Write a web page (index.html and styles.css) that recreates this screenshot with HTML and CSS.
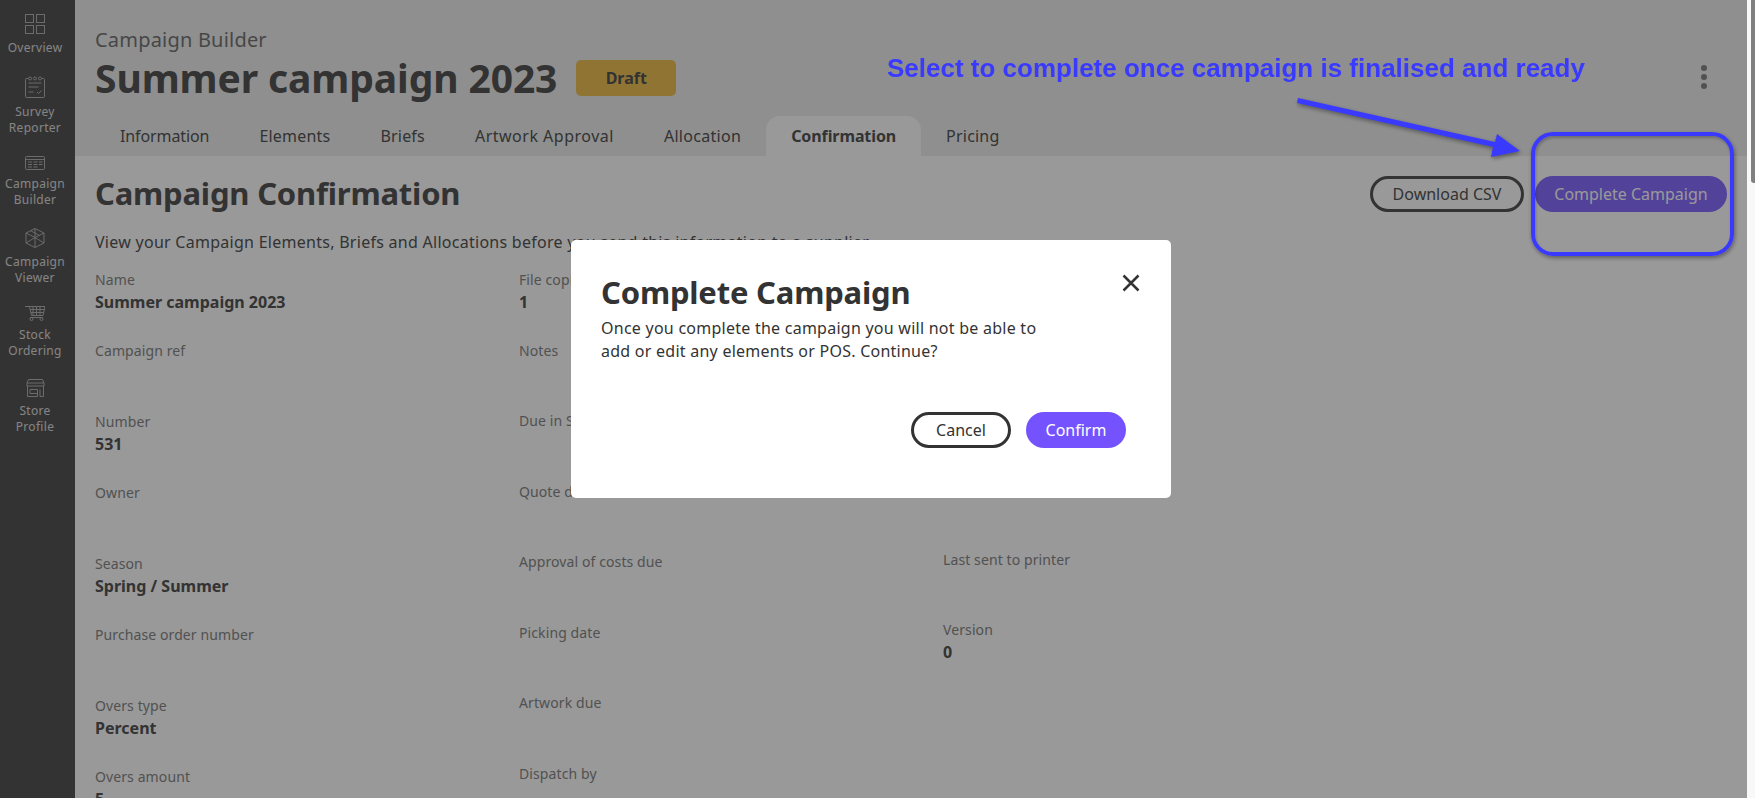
FILE: index.html
```html
<!DOCTYPE html>
<html lang="en">
<head>
  <meta charset="UTF-8" />
  <title>Campaign Builder</title>
  <link rel="stylesheet" href="styles.css">
</head>
<body>
  <nav class="sidebar">
    <a class="nav-item">
      <svg class="nav-icon" width="20" height="20" viewBox="0 0 20 20"><rect x=".5" y=".5" width="8" height="8"/><rect x="11.500" y=".5" width="8" height="8"/><rect x=".5" y="11.500" width="8" height="8"/><rect x="11.500" y="11.500" width="8" height="8"/></svg>
      <span>Overview</span>
    </a>
    <a class="nav-item">
      <svg class="nav-icon" width="20" height="22" viewBox="0 0 20 22"><path d="M3 2.500H1.500a1 1 0 0 0-1 1v17a1 1 0 0 0 1 1h17a1 1 0 0 0 1-1v-17a1 1 0 0 0-1-1H17"/><circle cx="5" cy="2.500" r="1.500"/><circle cx="10" cy="2.500" r="1.500"/><circle cx="15" cy="2.500" r="1.500"/><path d="M3.500 7h13M3.500 11h10M3.500 16h5M12 16l1.500 1.500 3-3"/></svg>
      <span>Survey<br>Reporter</span>
    </a>
    <a class="nav-item">
      <svg class="nav-icon" width="20" height="14" viewBox="0 0 20 14"><rect x=".5" y=".5" width="19" height="13" rx="1"/><path d="M1 3.500h18M3 6h4M3 8.500h4M3 11h4M8.500 6h4M8.500 8.500h4M8.500 11h4M14 6h3.500M14 8.500h3.500"/></svg>
      <span>Campaign<br>Builder</span>
    </a>
    <a class="nav-item">
      <svg class="nav-icon" width="20" height="20" viewBox="0 0 20 20"><path d="M10 .5l9 4.500v10l-9 4.500-9-4.500V5zM1 5l9 4.500L19 5M10 9.500v10M10 .5v9M1 15l9-5.500 9 5.500M5.500 2.700L14.500 7.500"/></svg>
      <span>Campaign<br>Viewer</span>
    </a>
    <a class="nav-item">
      <svg class="nav-icon" width="20" height="15" viewBox="0 0 20 15"><path d="M0 .5h20l-2 9H6.500L4.500.5M5 11.500h13M8 1v8.500M11.500 1v8.500M15 1v8.500M5 3.500h14M6 6.500h12.500"/><circle cx="6.500" cy="13" r="1.500"/><circle cx="16.500" cy="13" r="1.500"/></svg>
      <span>Stock<br>Ordering</span>
    </a>
    <a class="nav-item">
      <svg class="nav-icon" width="19" height="18" viewBox="0 0 19 18"><path d="M2.500.5h14l1.500 3.500H1zM1 4v3h17V4M1.500 7v10.500h10V10.500H4v4h7.500M17.500 7v10.500h-3.500v-7"/></svg>
      <span>Store<br>Profile</span>
    </a>
  </nav>

  <main class="page">
    <header class="page-head">
      <div class="head-top">
        <div class="crumb">Campaign Builder</div>
        <div class="title-row">
          <h1>Summer campaign 2023</h1>
          <span class="badge">Draft</span>
        </div>
      </div>
      <div class="more"><i></i><i></i><i></i></div>
      <div class="tabs">
        <a class="tab">Information</a>
        <a class="tab">Elements</a>
        <a class="tab">Briefs</a>
        <a class="tab">Artwork Approval</a>
        <a class="tab">Allocation</a>
        <a class="tab active">Confirmation</a>
        <a class="tab">Pricing</a>
      </div>
    </header>

    <section class="content">
      <div class="content-head">
        <h2>Campaign Confirmation</h2>
        <div class="actions">
          <button class="btn btn-outline btn-csv">Download CSV</button>
          <button class="btn btn-primary">Complete Campaign</button>
        </div>
      </div>
      <p class="intro">View your Campaign Elements, Briefs and Allocations before you send this information to a supplier.</p>

      <div class="fields">
        <div class="col col-a">
          <div class="field"><label>Name</label><strong>Summer campaign 2023</strong></div>
          <div class="field"><label>Campaign ref</label></div>
          <div class="field"><label>Number</label><strong>531</strong></div>
          <div class="field"><label>Owner</label></div>
          <div class="field"><label>Season</label><strong>Spring / Summer</strong></div>
          <div class="field"><label>Purchase order number</label></div>
          <div class="field"><label>Overs type</label><strong>Percent</strong></div>
          <div class="field"><label>Overs amount</label><strong>5</strong></div>
        </div>
        <div class="col col-b">
          <div class="field"><label>File copies</label><strong>1</strong></div>
          <div class="field"><label>Notes</label></div>
          <div class="field"><label>Due in Store</label></div>
          <div class="field"><label>Quote due</label></div>
          <div class="field"><label>Approval of costs due</label></div>
          <div class="field"><label>Picking date</label></div>
          <div class="field"><label>Artwork due</label></div>
          <div class="field"><label>Dispatch by</label></div>
        </div>
        <div class="col col-c">
          <div class="field"><label>Last sent to printer</label></div>
          <div class="field"><label>Version</label><strong>0</strong></div>
        </div>
      </div>
    </section>
  </main>

  <div class="scrollbar"><div class="scroll-thumb"></div></div>

  <div class="overlay"></div>

  <div class="modal-wrap">
    <div class="modal">
      <svg class="modal-close" width="18" height="18" viewBox="0 0 18 18"><path d="M1.500 1.500l15 15M16.500 1.500l-15 15"/></svg>
      <h3>Complete Campaign</h3>
      <p>Once you complete the campaign you will not be able to add or edit any elements or POS. Continue?</p>
      <div class="modal-actions">
        <button class="btn btn-outline modal-btn">Cancel</button>
        <button class="btn btn-confirm modal-btn">Confirm</button>
      </div>
    </div>
  </div>

  <!-- annotation drawn on top of the screenshot -->
  <div class="note-text">Select to complete once campaign is finalised and ready</div>
  <div class="note-box"></div>
  <svg class="note-arrow" width="240" height="70" viewBox="0 0 240 70"><path d="M2 1L199 45 201 37 224 54 195 60 197 50 1 6z"/></svg>
</body>
</html>
```

FILE: styles.css
```css
* { box-sizing: border-box; }
html, body {
  margin: 0;
  padding: 0;
  height: 100%;
  overflow: hidden;
}
body {
  display: flex;
  font-family: "Noto Sans", Arial, sans-serif;
  color: #555;
  background: #fff;
}

/* sidebar */
.sidebar {
  width: 75px;
  flex: none;
  background: #555;
  padding: 14px 5px 0 0;
  display: flex;
  flex-direction: column;
  gap: 20px;
}
.nav-item {
  display: flex;
  flex-direction: column;
  align-items: center;
  text-align: center;
  font-size: 12px;
  line-height: 16px;
  letter-spacing: 0.3px;
  color: #fff;
  opacity: 0.8;
}
.nav-icon {
  margin-bottom: 6px;
  fill: none;
  stroke: #ccc;
  stroke-width: 1;
}

/* page */
.page {
  flex: 1;
  min-width: 0;
  height: 100%;
  overflow: hidden;
}
.page-head {
  position: relative;
  height: 156px;
  background: #eee;
  padding: 28px 20px 0;
  display: flex;
  flex-direction: column;
}
.crumb {
  font-size: 20px;
  line-height: 24px;
  letter-spacing: 0.2px;
  color: #777;
}
.title-row {
  display: flex;
  align-items: center;
  gap: 19px;
  height: 50px;
  margin-top: 1px;
}
h1 {
  margin: 0;
  font-size: 39px;
  line-height: 48px;
  letter-spacing: -0.1px;
  font-weight: 700;
  color: #555;
}
.badge {
  width: 100px;
  height: 36px;
  line-height: 36px;
  border-radius: 5px;
  background: #f0c255;
  text-align: center;
  font-size: 16px;
  font-weight: 700;
}
.more {
  position: absolute;
  right: 40px;
  top: 65px;
  display: flex;
  flex-direction: column;
  gap: 3px;
}
.more i {
  width: 6px;
  height: 6px;
  border-radius: 50%;
  background: #888;
}
.tabs {
  display: flex;
  margin-top: auto;
}
.tab {
  height: 40px;
  line-height: 40px;
  padding: 0 25px;
  font-size: 16px;
  letter-spacing: 0.2px;
  border-radius: 14px 14px 0 0;
}
.tab:first-child {
  letter-spacing: -0.1px;
}
.tab:nth-child(4) {
  letter-spacing: 0.5px;
}
.tab:nth-child(5) {
  letter-spacing: 0.3px;
}
.tab.active {
  background: #fff;
  font-weight: 700;
  letter-spacing: -0.1px;
}

/* content */
.content {
  padding: 20px 20px 0;
}
.content-head {
  display: flex;
  align-items: center;
  justify-content: space-between;
  height: 36px;
}
h2 {
  margin: 0 0 2px;
  font-size: 31px;
  letter-spacing: -0.2px;
  font-weight: 700;
}
.actions {
  display: flex;
  gap: 11px;
}
.btn {
  height: 36px;
  padding: 0;
  border-radius: 18px;
  border: 3px solid #555;
  background: transparent;
  font-family: inherit;
  font-size: 16px;
  color: #555;
  white-space: nowrap;
}
.btn-csv {
  width: 154px;
}
.btn-primary {
  border: none;
  width: 192px;
  background: #896eff;
  color: #fff;
}
.intro {
  margin: 18px 0 0;
  font-size: 16px;
  line-height: 24px;
  letter-spacing: 0.27px;
}
.fields {
  display: flex;
  margin-top: 16px;
}
.col-a { width: 424px; }
.col-b { width: 424px; }
.field {
  height: 71px;
}
.col-b .field { height: 70.5px; }
.col-c {
  padding-top: 280px;
}
.col-c .field { height: 70px; }
.field label {
  display: block;
  font-size: 14px;
  line-height: 20px;
  letter-spacing: 0.1px;
  color: #888;
}
.field strong {
  display: block;
  font-size: 16px;
  line-height: 24px;
}

/* scrollbar */
.scrollbar {
  position: relative;
  z-index: 1;
  width: 8px;
  flex: none;
  background: #f8f8f8;
  padding-left: 4px;
}
.scroll-thumb {
  width: 4px;
  height: 183px;
  background: #808080;
  border-radius: 0 0 0 3px;
}

/* modal */
.overlay {
  position: fixed;
  inset: 0;
  background: rgba(0, 0, 0, 0.4);
}
.modal-wrap {
  position: fixed;
  left: 571px;
  top: 240px;
}
.modal {
  position: relative;
  width: 600px;
  height: 258px;
  background: #fff;
  border-radius: 5px;
  padding: 30px 30px 0;
  color: #333;
}
.modal-close {
  position: absolute;
  right: 31px;
  top: 34px;
  fill: none;
  stroke: #333;
  stroke-width: 2.5;
}
h3 {
  margin: 0 0 3px;
  font-size: 31px;
  line-height: 44px;
  letter-spacing: -0.2px;
  font-weight: 700;
}
.modal p {
  margin: 0;
  width: 440px;
  font-size: 16px;
  line-height: 22.5px;
  letter-spacing: 0.25px;
}
.modal-actions {
  position: absolute;
  right: 45px;
  bottom: 50px;
  display: flex;
  gap: 15px;
}
.modal-btn {
  width: 100px;
  color: #333;
  border-color: #333;
}
.btn-confirm {
  border: none;
  background: #7453ff;
  color: #fff;
}

/* annotation */
.note-text {
  position: fixed;
  left: 887px;
  top: 52px;
  font-family: "Liberation Sans", Arial, sans-serif;
  font-size: 26px;
  line-height: 32px;
  font-weight: 700;
  color: #3a3aff;
  white-space: nowrap;
}
.note-box {
  position: fixed;
  left: 1531px;
  top: 132px;
  width: 203px;
  height: 124px;
  border: 4.5px solid #3a3aff;
  border-radius: 22px;
  box-shadow: 1px 2px 4px rgba(0, 0, 0, 0.4), inset 1px 2px 3px rgba(0, 0, 0, 0.25);
}
.note-arrow {
  position: fixed;
  left: 1296px;
  top: 97px;
  fill: #3a3aff;
  filter: drop-shadow(1px 2px 2px rgba(0, 0, 0, 0.4));
}
```
